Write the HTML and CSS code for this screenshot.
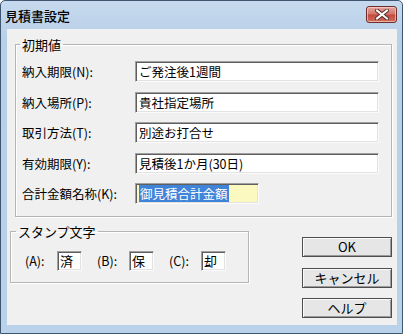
FILE: index.html
```html
<!DOCTYPE html>
<html lang="ja">
<head>
<meta charset="utf-8">
<title>見積書設定</title>
<link rel="stylesheet" href="styles.css">
</head>
<body>
<div class="window">
  <div class="titlebar">
    <span class="title">見積書設定</span>
    <div class="close">
      <svg width="14" height="11" viewBox="0 0 14 11">
        <path d="M2 1.5 L12 9.5 M12 1.5 L2 9.5" stroke="#5a2a2a" stroke-width="4" stroke-linecap="square"/>
        <path d="M2 1.5 L12 9.5 M12 1.5 L2 9.5" stroke="#ffffff" stroke-width="2" stroke-linecap="square"/>
      </svg>
    </div>
  </div>
  <div class="client">
    <fieldset class="group initial">
      <legend>初期値</legend>
      <div class="form">
        <label>納入期限(N):</label><div class="field">ご発注後1週間</div>
        <label>納入場所(P):</label><div class="field">貴社指定場所</div>
        <label>取引方法(T):</label><div class="field">別途お打合せ</div>
        <label>有効期限(Y):</label><div class="field">見積後1か月(30日)</div>
        <label>合計金額名称(K):</label><div class="field short"><span class="sel">御見積合計金額</span></div>
      </div>
    </fieldset>
    <div class="bottom">
      <fieldset class="group stamp">
        <legend>スタンプ文字</legend>
        <div class="stamps">
          <span class="slabel">(A):</span><div class="field tiny">済</div>
          <span class="slabel">(B):</span><div class="field tiny">保</div>
          <span class="slabel">(C):</span><div class="field tiny">却</div>
        </div>
      </fieldset>
      <div class="buttons">
        <button class="btn">OK</button>
        <button class="btn">キャンセル</button>
        <button class="btn">ヘルプ</button>
      </div>
    </div>
  </div>
</div>
</body>
</html>
```
FILE: styles.css
```css
* { box-sizing: border-box; }
html, body { margin: 0; padding: 0; }
body {
  font-family: "Noto Sans CJK JP", "Noto Sans", sans-serif;
  font-size: 13px;
  color: #000;
  background: #fff;
}
.window {
  width: 403px;
  height: 334px;
  border: 1px solid #3e5570;
  border-radius: 5px 5px 0 0;
  background: linear-gradient(#c6d9ee, #b8cfe8 40px, #bad1ea);
  display: flex;
  flex-direction: column;
}
.titlebar {
  height: 28px;
  flex: none;
  display: flex;
  align-items: flex-start;
  justify-content: space-between;
  padding-left: 4px;
}
.title {
  font-size: 13px;
  font-weight: 500;
  line-height: 15px;
  margin-top: 7px;
  color: #000;
}
.close {
  margin-top: 5px;
  margin-right: 5px;
  width: 31px;
  height: 17px;
  border: 1px solid #6e2e2a;
  border-radius: 3px;
  background: linear-gradient(#e3a79f, #d4776c 45%, #c24c40 55%, #cf6e5e);
  box-shadow: inset 0 0 0 1px rgba(255,220,210,0.6);
  display: flex;
  align-items: center;
  justify-content: center;
}
.client {
  flex: 1;
  margin: 0 5px 8px 6px;
  background: #f0f0f0;
  display: flex;
  flex-direction: column;
}
.group {
  border: 1px solid #b5b5b5;
  box-shadow: inset 1px 1px 0 #fff, 1px 1px 0 #fff;
  padding: 0;
  min-width: 0;
}
.group legend {
  padding: 0 2px;
  line-height: 15px;
  font-size: 13px;
}
.initial {
  margin: 8px 5px 0 8px;
}
.initial legend { margin-left: 4px; }
.form {
  display: grid;
  grid-template-columns: 113px 244px;
  grid-auto-rows: 21px;
  row-gap: 9.5px;
  padding: 9px 0 12px 6px;
  align-items: center;
}
.form label {
  font-size: 12.5px;
  line-height: 21px;
  white-space: nowrap;
}
.field {
  height: 21px;
  background: #fff;
  border: 1px solid;
  border-color: #a0a0a0 #fbfbfb #fbfbfb #a0a0a0;
  box-shadow: inset 1px 1px 0 #5e5e5e, inset -1px -1px 0 #e2e2e2;
  padding: 0 3px;
  font-size: 12.5px;
  line-height: 19px;
  white-space: nowrap;
  overflow: hidden;
}
.field.short {
  width: 124px;
  background: #fbf8c0;
}
.sel {
  background: #3f84d8;
  color: #fff;
  padding: 0 1px;
  display: inline-block;
  line-height: 17px;
  margin-top: 1px;
}
.bottom {
  display: flex;
  justify-content: space-between;
  align-items: flex-start;
}
.stamp {
  margin: 7px 0 0 3px;
  width: 239px;
}
.stamp legend { margin-left: 5px; }
.stamps {
  display: flex;
  align-items: center;
  padding: 12px 0 11px 14px;
}
.slabel {
  width: 32px;
  font-size: 12.5px;
  line-height: 20px;
}
.field.tiny {
  width: 25px;
  height: 20px;
  line-height: 18px;
  padding: 0 2px;
  margin-right: 15px;
  font-size: 13px;
}
.field.tiny:last-child { margin-right: 0; }
.buttons {
  margin: 20px 5px 0 0;
  display: flex;
  flex-direction: column;
  gap: 10.5px;
}
.btn {
  width: 90px;
  height: 20px;
  padding: 0;
  font-family: inherit;
  font-size: 13px;
  line-height: 16px;
  color: #000;
  background: #e6e6e6;
  border: 1px solid #4e4e4e;
  box-shadow: inset 1px 1px 0 #fafafa, inset -1px -1px 0 #9a9a9a;
}
```
